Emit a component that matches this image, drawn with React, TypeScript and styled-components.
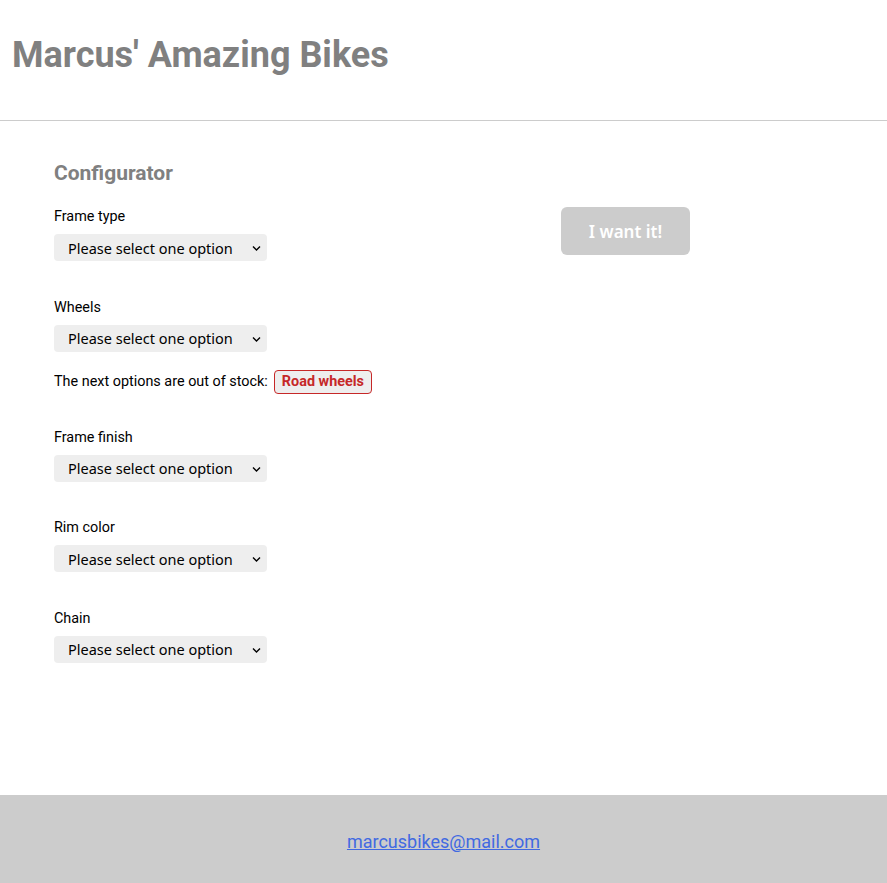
import React from "react";
import styled, { createGlobalStyle } from "styled-components";

const Global = createGlobalStyle`
  html, body { margin: 0; padding: 0; background: #fff; }
  body { font-family: Roboto, "Liberation Sans", sans-serif; color: #000; }
`;

const Page = styled.div`
  min-height: 883px;
  display: flex;
  flex-direction: column;
`;

const Header = styled.header`
  height: 120px;
  border-bottom: 1px solid #cccccc;
  display: flex;
  align-items: center;
  padding: 0 12px;
  box-sizing: content-box;
`;

const Title = styled.h1`
  margin: -10px 0 0;
  font-size: 36px;
  font-weight: 700;
  color: #808080;
  line-height: 1;
`;

const Main = styled.main`
  flex: 1;
  display: flex;
  padding: 40px 54px 0;
`;

const Configurator = styled.section`
  width: 507px;
  display: flex;
  flex-direction: column;
`;

const Heading = styled.h2`
  margin: 0 0 23px;
  font-size: 21px;
  font-weight: 700;
  color: #808080;
  line-height: 24px;
`;

const Group = styled.div`
  display: flex;
  flex-direction: column;
  gap: 8px;
  margin-bottom: 37.5px;
`;

const Label = styled.label`
  font-size: 14.4px;
  line-height: 18px;
`;

const SelectWrap = styled.div`
  position: relative;
  width: 213px;
  height: 27px;
`;

const Select = styled.select`
  appearance: none;
  -webkit-appearance: none;
  width: 213px;
  height: 27px;
  border: none;
  border-radius: 4px;
  background-color: #eeeeee;
  padding: 0 24px 0 14px;
  font-family: "Noto Sans", "Open Sans", sans-serif;
  font-size: 14.5px;
  color: #000;
  outline: none;
`;

const Chevron = styled.svg`
  position: absolute;
  right: 6px;
  top: 11px;
  width: 9px;
  height: 6px;
  pointer-events: none;
`;

const StockLine = styled.div`
  display: flex;
  align-items: center;
  gap: 6px;
  font-size: 14.4px;
  margin: 10px 0 -2.5px;
`;

const Badge = styled.span`
  display: inline-flex;
  align-items: center;
  box-sizing: border-box;
  height: 24px;
  padding: 0 7px;
  border: 1px solid #c62828;
  border-radius: 4px;
  background: #eeeeee;
  color: #c62828;
  font-weight: 700;
  font-size: 14.4px;
`;

const BuyButton = styled.button`
  margin-top: 46px;
  width: 129px;
  height: 48px;
  border: none;
  border-radius: 6px;
  background: #cccccc;
  color: #ffffff;
  font-family: "Noto Sans", "Open Sans", sans-serif;
  font-weight: 600;
  font-size: 17px;
  align-self: flex-start;
`;

const Footer = styled.footer`
  height: 88px;
  box-sizing: border-box;
  padding-top: 4px;
  background: #cccccc;
  display: flex;
  align-items: center;
  justify-content: center;
`;

const Mail = styled.a`
  color: #4169e1;
  font-size: 18px;
  text-decoration: underline;
`;

const parts = [
  { name: "Frame type", out: [] as string[] },
  { name: "Wheels", out: ["Road wheels"] },
  { name: "Frame finish", out: [] as string[] },
  { name: "Rim color", out: [] as string[] },
  { name: "Chain", out: [] as string[] },
];

export default function App() {
  return (
    <>
      <Global />
      <Page>
        <Header>
          <Title>Marcus' Amazing Bikes</Title>
        </Header>
        <Main>
          <Configurator>
            <Heading>Configurator</Heading>
            {parts.map((p) => (
              <Group key={p.name}>
                <Label>{p.name}</Label>
                <SelectWrap>
                  <Select defaultValue="">
                    <option value="">Please select one option</option>
                  </Select>
                  <Chevron viewBox="0 0 9 6" aria-hidden="true">
                    <path d="M1 1.5 L4.5 5 L8 1.5" fill="none" stroke="#000" strokeWidth="1.4" />
                  </Chevron>
                </SelectWrap>
                {p.out.length > 0 && (
                  <StockLine>
                    The next options are out of stock:
                    {p.out.map((o) => (
                      <Badge key={o}>{o}</Badge>
                    ))}
                  </StockLine>
                )}
              </Group>
            ))}
          </Configurator>
          <BuyButton disabled>I want it!</BuyButton>
        </Main>
        <Footer>
          <Mail href="mailto:marcusbikes@mail.com">marcusbikes@mail.com</Mail>
        </Footer>
      </Page>
    </>
  );
}
